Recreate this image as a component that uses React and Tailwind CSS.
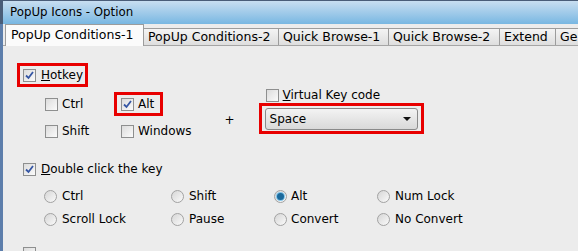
import React from 'react'

function Check({ checked }) {
  return (
    <span className="flex w-[13px] h-[13px] shrink-0 items-center justify-center border border-[#8e8f8f] bg-gradient-to-br from-[#dcdcdc] to-[#fbfbfb]">
      {checked && (
        <svg width="9" height="9" viewBox="0 0 9 9">
          <path d="M1 4.5 L3.5 7 L8 1" fill="none" stroke="#3556a4" strokeWidth="1.8" />
        </svg>
      )}
    </span>
  )
}

function Radio({ checked }) {
  return (
    <span className="flex w-[13px] h-[13px] shrink-0 items-center justify-center rounded-full border border-[#a2a2a2] bg-gradient-to-br from-[#d6d6d6] to-[#fafafa]">
      {checked && (
        <span className="w-[7px] h-[7px] rounded-full bg-[#1c6a9c] ring-1 ring-[#7fc4ea]" />
      )}
    </span>
  )
}

function Label({ children }) {
  return <span className="leading-[14px] whitespace-nowrap">{children}</span>
}

function Tab({ label, w }) {
  return (
    <div className={`h-[17px] ${w} shrink-0 flex items-center pl-[4px] bg-gradient-to-b from-[#f4f4f4] to-[#dedede] border border-b-0 border-l-0 border-[#9c9c9c] text-[12.5px] leading-none whitespace-nowrap overflow-hidden`}>
      {label}
    </div>
  )
}

export default function App() {
  return (
    <div className="w-[578px] h-[251px] overflow-hidden flex flex-col text-[12px] text-black font-['DejaVu_Sans',sans-serif]">

      {/* Title bar */}
      <div className="h-[24px] shrink-0 flex items-center pl-[7px] border-t border-l-[3px] border-[#4a5d78] bg-gradient-to-b from-[#c8def0] to-[#78b7e2]">
        <span className="text-[11.8px]">PopUp Icons - Option</span>
      </div>

      <div className="flex-1 flex flex-col border-l-[3px] border-[#5d7eab] bg-[#ececec]">

        {/* Tabs */}
        <div className="h-[22px] shrink-0 flex items-end bg-[#ececec] border-b border-[#a5a5a5]">
          <div className="ml-[2px] h-[22px] w-[139px] shrink-0 flex items-center pl-[5px] bg-[#fbfbfb] border border-b-0 border-[#9c9c9c] text-[12.5px] leading-none -mb-px whitespace-nowrap">
            PopUp Conditions-1
          </div>
          <Tab label="PopUp Conditions-2" w="w-[135px]" />
          <Tab label="Quick Browse-1" w="w-[110px]" />
          <Tab label="Quick Browse-2" w="w-[111px]" />
          <Tab label="Extend" w="w-[56px]" />
          <Tab label="Ge" w="w-[40px]" />
        </div>

        {/* Hotkey */}
        <div className="mt-[17px] ml-[14px] flex">
          <div className="h-[24px] flex items-center gap-[5px] pl-[3px] pr-[2px] border-[3px] border-[#e80000]">
            <Check checked />
            <Label><span className="underline">H</span>otkey</Label>
          </div>
        </div>

        <div className="mt-[1px] flex">
          {/* Modifier keys */}
          <div className="ml-[42px] pt-[4px] flex flex-col gap-[3px]">
            <div className="h-[24px] flex items-center">
              <div className="w-[69px] flex items-center gap-[4px]">
                <Check />
                <Label>Ctrl</Label>
              </div>
              <div className="w-[49px] h-[24px] flex items-center gap-[4px] pl-[4px] border-[3px] border-[#e80000]">
                <Check checked />
                <Label>Alt</Label>
              </div>
            </div>
            <div className="h-[24px] flex items-center">
              <div className="w-[69px] flex items-center gap-[4px]">
                <Check />
                <Label>Shift</Label>
              </div>
              <div className="pl-[7px] flex items-center gap-[4px]">
                <Check />
                <Label>Windows</Label>
              </div>
            </div>
          </div>

          <div className="ml-[33px] pt-[23px] w-[19px]">
            <Label>+</Label>
          </div>

          {/* Virtual key */}
          <div className="ml-[15px] flex flex-col">
            <div className="h-[14px] flex items-center gap-[4px] pl-[7px]">
              <Check />
              <Label><span className="underline">V</span>irtual Key code</Label>
            </div>
            <div className="mt-[1px] w-[165px] h-[31px] flex items-center pl-[3px] border-[3px] border-[#e80000]">
              <div className="w-[153px] h-[22px] flex items-center justify-between pl-[4px] pr-[6px] rounded-[3px] border border-[#8a8a8a] bg-gradient-to-b from-[#f3f3f3] to-[#d9d9d9]">
                <Label>Space</Label>
                <svg width="8" height="4" viewBox="0 0 8 4">
                  <path d="M0 0 H8 L4 4 Z" fill="#111" />
                </svg>
              </div>
            </div>
          </div>
        </div>

        {/* Double click */}
        <div className="mt-[19px] ml-[20px] h-[14px] flex items-center gap-[5px]">
          <Check checked />
          <Label><span className="underline">D</span>ouble click the key</Label>
        </div>

        <div className="mt-[10px] ml-[41px] flex flex-col gap-[3px]">
          <div className="h-[20px] flex items-center">
            <div className="w-[127px] flex items-center gap-[5px]"><Radio /><Label>Ctrl</Label></div>
            <div className="w-[103px] flex items-center gap-[5px]"><Radio /><Label>Shift</Label></div>
            <div className="w-[103px] flex items-center gap-[4px]"><Radio checked /><Label>Alt</Label></div>
            <div className="flex items-center gap-[5px]"><Radio /><Label>Num Lock</Label></div>
          </div>
          <div className="h-[20px] flex items-center">
            <div className="w-[127px] flex items-center gap-[5px]"><Radio /><Label>Scroll Lock</Label></div>
            <div className="w-[103px] flex items-center gap-[5px]"><Radio /><Label>Pause</Label></div>
            <div className="w-[103px] flex items-center gap-[4px]"><Radio /><Label>Convert</Label></div>
            <div className="flex items-center gap-[5px]"><Radio /><Label>No Convert</Label></div>
          </div>
        </div>

        <div className="mt-[18px] ml-[20px] flex">
          <Check />
        </div>
      </div>
    </div>
  )
}
